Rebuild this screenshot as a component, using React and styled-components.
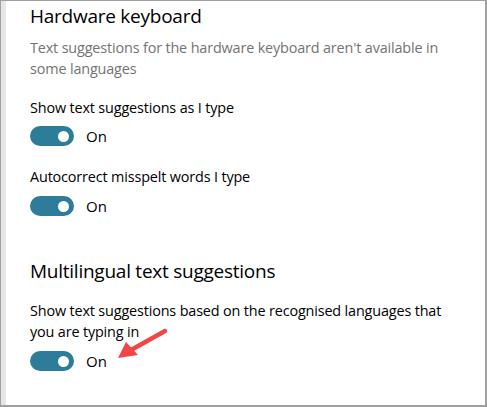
import React from "react";
import styled, { createGlobalStyle } from "styled-components";

const GlobalStyle = createGlobalStyle`
  html, body {
    margin: 0;
    padding: 0;
    background: #ffffff;
  }
  body {
    font-family: "Open Sans", "Noto Sans", sans-serif;
  }
`;

const Frame = styled("div")`
  width: 487px;
  height: 407px;
  box-sizing: border-box;
  border-top: 1px solid #a0a0a0;
  border-right: 2px solid #a0a0a0;
  border-bottom: 2px solid #a0a0a0;
  border-left: 1px solid #a0a0a0;
  box-shadow: inset 5px 0 0 #e6e6e6;
  position: relative;
  overflow: hidden;
`;

const Content = styled("div")`
  display: flex;
  flex-direction: column;
  padding: 0 20px 0 29px;
`;

const Heading = styled("h2")`
  margin: ${({ top }) => top || 0}px 0 0;
  font-size: 19px;
  font-weight: 400;
  line-height: 28px;
  color: #000;
  letter-spacing: -0.25px;
`;

const Text = styled("p")`
  margin: ${({ top }) => top || 0}px 0 0;
  font-size: 14.4px;
  line-height: 21px;
  color: ${({ muted }) => (muted ? "#737373" : "#000")};
  letter-spacing: -0.15px;
`;

const ToggleRow = styled("div")`
  display: flex;
  align-items: center;
  gap: 12px;
  margin-top: ${({ top }) => top || 0}px;
`;

const Track = styled("span")`
  width: 44px;
  height: 20px;
  border-radius: 10px;
  background: #2d7d9a;
  display: flex;
  align-items: center;
  justify-content: flex-end;
  padding-right: 5px;
  box-sizing: border-box;
`;

const Knob = styled("span")`
  width: 11px;
  height: 11px;
  border-radius: 50%;
  background: #ffffff;
`;

const State = styled("span")`
  font-size: 15px;
  color: #000;
`;

const Arrow = styled("svg")`
  position: absolute;
  left: 110px;
  top: 322px;
`;

function Toggle({ top }) {
  return (
    <ToggleRow top={top}>
      <Track>
        <Knob />
      </Track>
      <State>On</State>
    </ToggleRow>
  );
}

export default function App() {
  return (
    <>
      <GlobalStyle />
      <Frame>
        <Content>
          <Heading top={1}>Hardware keyboard</Heading>
          <Text muted top={7}>
            Text suggestions for the hardware keyboard aren't available in some languages
          </Text>
          <Text top={18}>Show text suggestions as I type</Text>
          <Toggle top={8} />
          <Text top={20}>Autocorrect misspelt words I type</Text>
          <Toggle top={9} />
          <Heading top={41}>Multilingual text suggestions</Heading>
          <Text top={15}>
            Show text suggestions based on the recognised languages that you are typing in
          </Text>
          <Toggle top={9} />
        </Content>
        <Arrow width="60" height="40" viewBox="0 0 60 40">
          <line x1="54" y1="8" x2="20" y2="27" stroke="#f04646" strokeWidth="4.5" strokeLinecap="round" />
          <polygon points="7,35 15,19 27,32" fill="#f04646" />
        </Arrow>
      </Frame>
    </>
  );
}
